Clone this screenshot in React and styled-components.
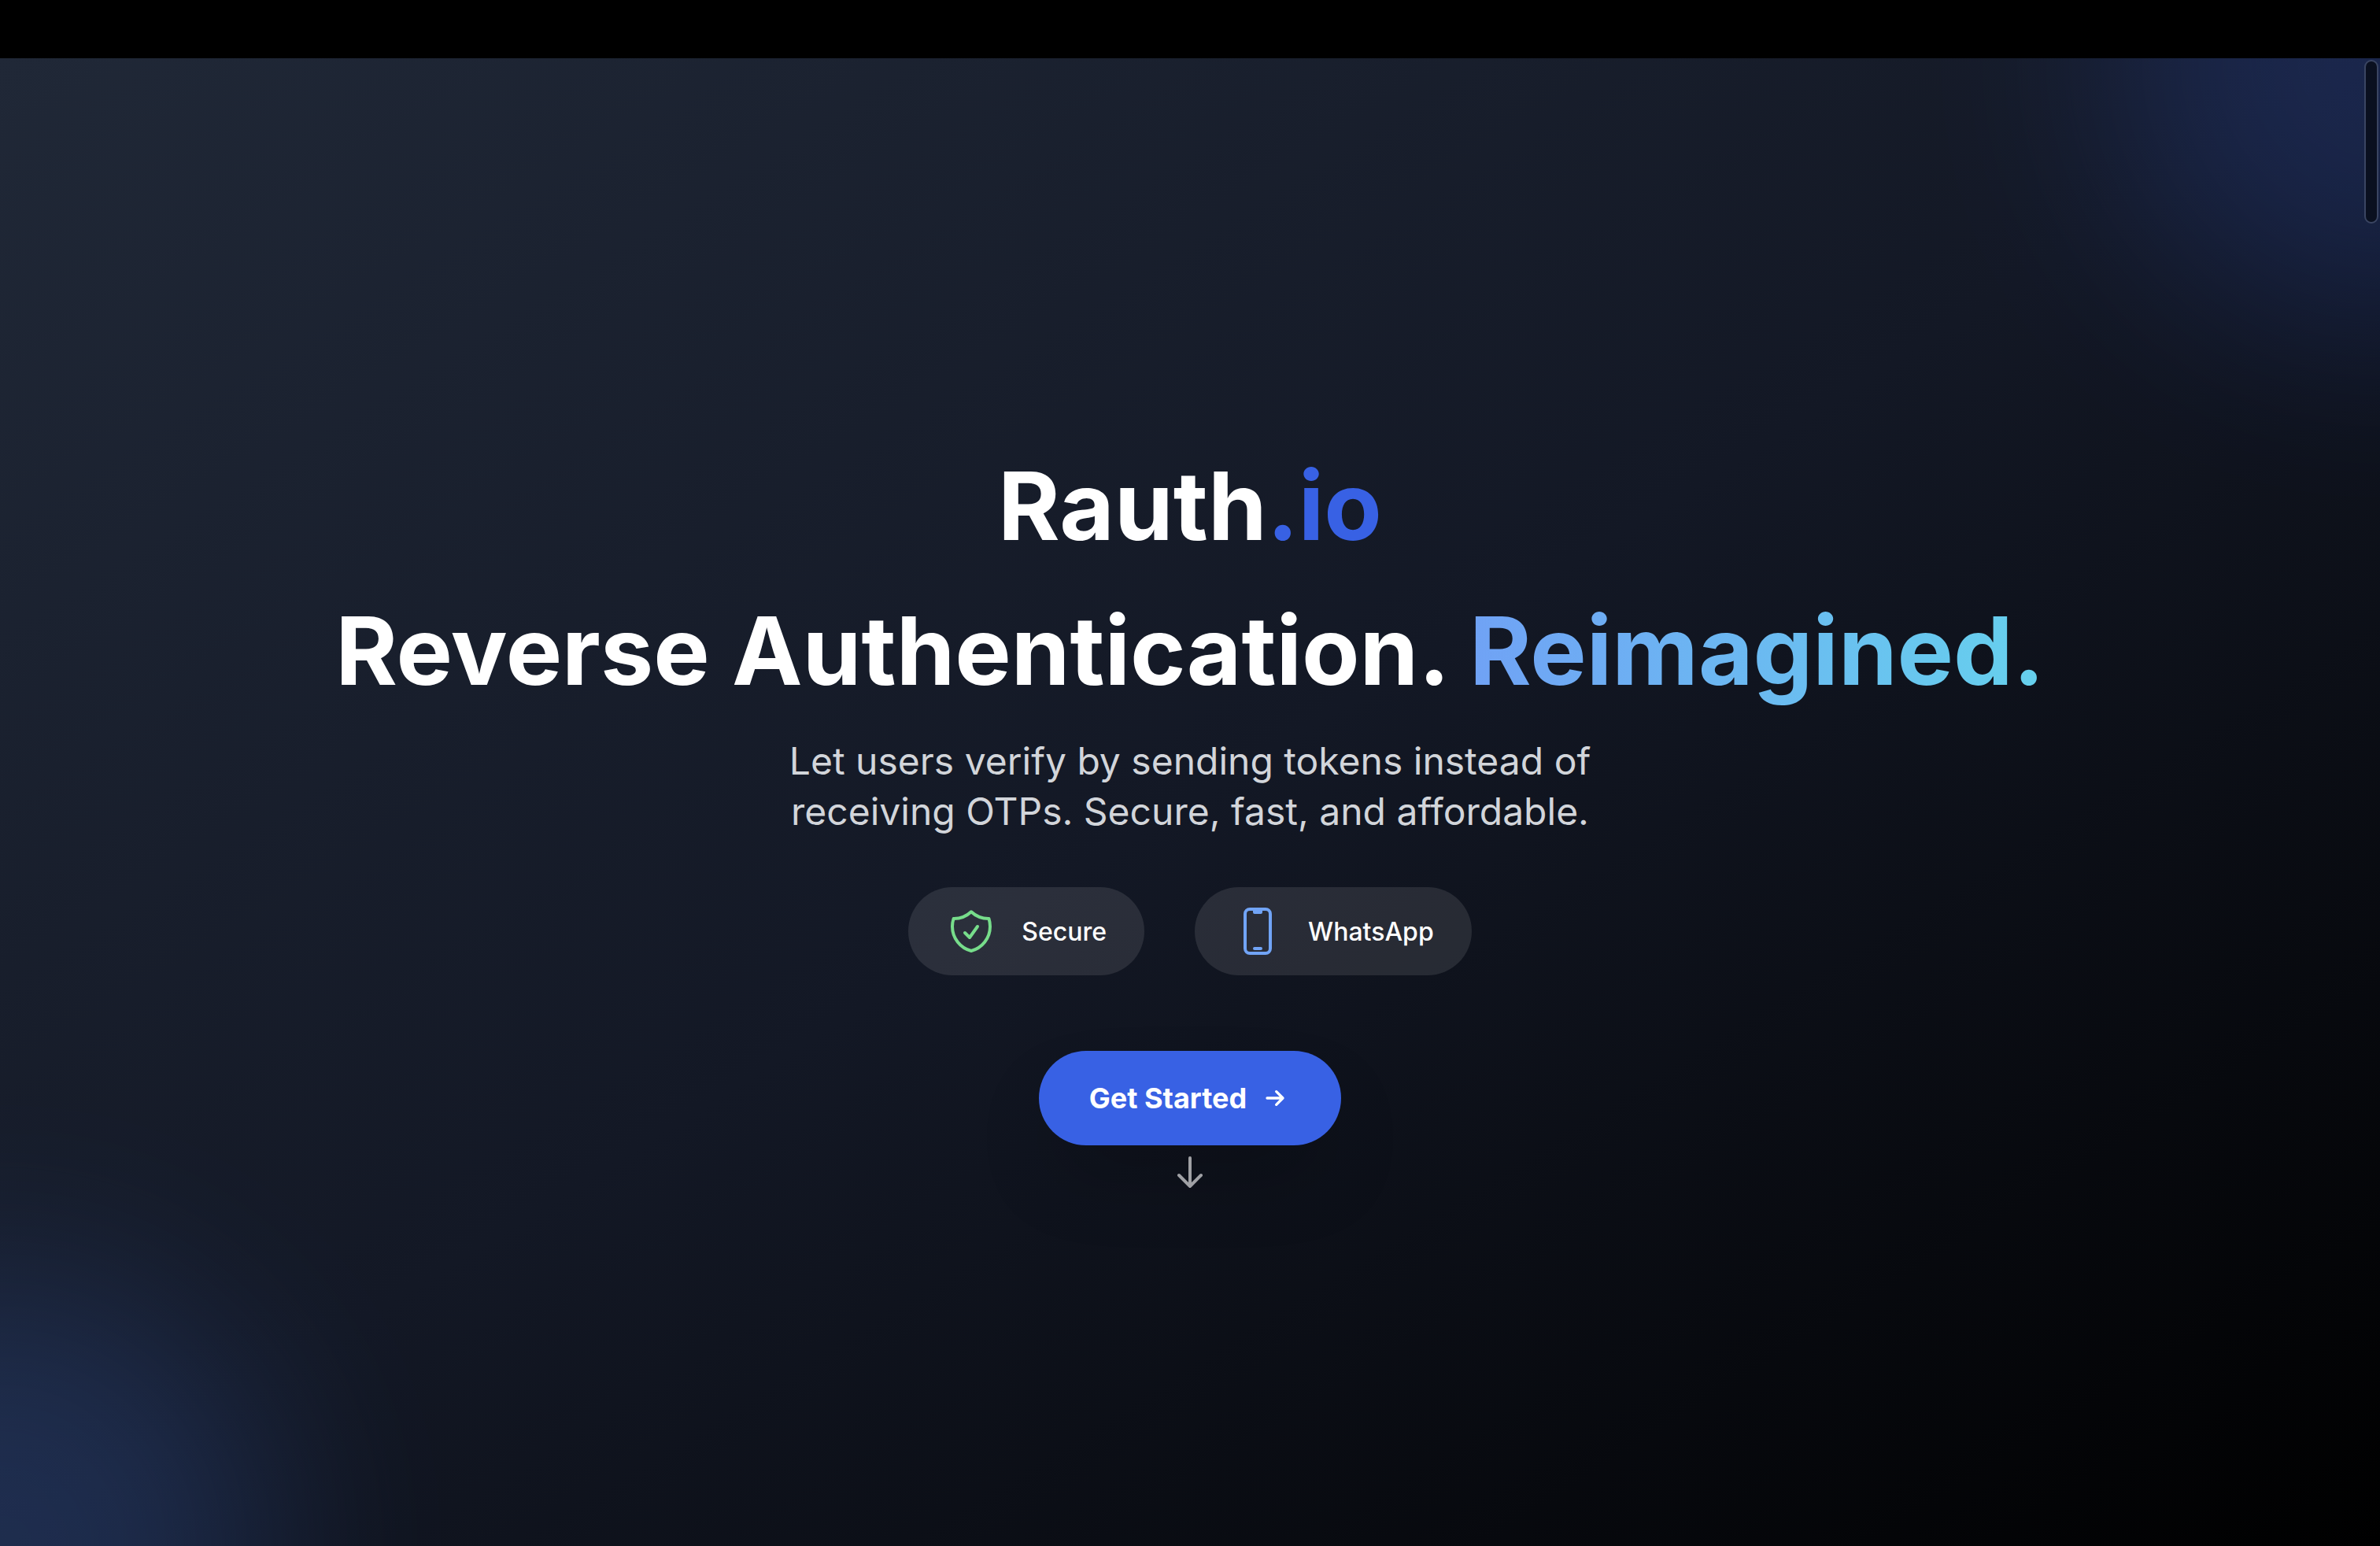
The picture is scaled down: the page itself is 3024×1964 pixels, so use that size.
import React from "react";
import styled, { createGlobalStyle } from "styled-components";
import { HiOutlineShieldCheck, HiOutlineDevicePhoneMobile } from "react-icons/hi2";

const FEATURES = [
  { id: 1, name: "Secure", icon: HiOutlineShieldCheck, color: "#77dd8b" },
  { id: 2, name: "WhatsApp", icon: HiOutlineDevicePhoneMobile, color: "#71a4f6" },
];

const App = () => {
  return (
    <Page>
      <GlobalStyle />
      <TopBar />
      <Hero>
        <Glow $corner="topRight" />
        <Glow $corner="bottomLeft" />
        <Content>
          <Brand>
            Rauth<span>.io</span>
          </Brand>
          <Headline>
            Reverse Authentication. <span>Reimagined.</span>
          </Headline>
          <Tagline>Let users verify by sending tokens instead of receiving OTPs. Secure, fast, and affordable.</Tagline>
          <FeatureList>
            {FEATURES.map(({ id, name, icon: Icon, color }) => (
              <Feature key={id}>
                <Icon size="64px" color={color} />
                {name}
              </Feature>
            ))}
          </FeatureList>
          <StartButton type="button">
            Get Started
            <svg viewBox="0 0 24 24" width="40" height="40" aria-hidden="true">
              <path d="M13 7l5 5m0 0l-5 5m5-5H6" />
            </svg>
          </StartButton>
        </Content>
        <ScrollHint viewBox="0 0 24 24" aria-hidden="true">
          <path d="M19 14l-7 7m0 0l-7-7m7 7V3" />
        </ScrollHint>
        <ScrollThumb />
      </Hero>
    </Page>
  );
};

const GlobalStyle = createGlobalStyle`
  *,
  *::before,
  *::after {
    box-sizing: border-box;
  }

  body {
    margin: 0;
    background-color: black;
    color: white;
    font-family: Inter, "Liberation Sans", sans-serif;
  }

  h1, h2, p, ul {
    margin: 0;
    padding: 0;
  }
`;

const Page = styled.div`
  display: flex;
  flex-direction: column;
  min-height: 100vh;
`;

const TopBar = styled.header`
  height: 74px;
  background-color: black;
`;

const Hero = styled.main`
  position: relative;
  display: grid;
  grid-template-rows: 1fr auto 1fr;
  justify-items: center;
  flex: 1;
  overflow: hidden;
  background-image: linear-gradient(to bottom right, #202837, #131825 50%, #000000);
`;

const Glow = styled.div`
  position: absolute;
  width: 680px;
  height: 680px;
  border-radius: 50%;
  opacity: 0.2;
  filter: blur(128px);
  ${(props) =>
    props.$corner === "topRight"
      ? "top: -340px; right: -340px; background-color: #3861e4;"
      : "bottom: -340px; left: -340px; background-color: #4b80ef;"}
`;

const Content = styled.div`
  position: relative;
  display: flex;
  flex-direction: column;
  align-items: center;
  grid-row: 2;
  text-align: center;
`;

const Brand = styled.h1`
  margin-bottom: 64px;
  font-size: 120px;
  font-weight: 700;
  line-height: 120px;

  span {
    color: #3861e4;
  }
`;

const Headline = styled.h2`
  margin-bottom: 48px;
  font-size: 120px;
  font-weight: 700;
  line-height: 120px;

  span {
    color: transparent;
    background-image: linear-gradient(to right, #70a2f5, #66d1ed);
    background-clip: text;
  }
`;

const Tagline = styled.p`
  max-width: 1152px;
  margin-bottom: 64px;
  color: #d2d5da;
  font-size: 48px;
  line-height: 64px;
`;

const FeatureList = styled.ul`
  display: flex;
  gap: 64px;
  margin-bottom: 96px;
  list-style: none;
`;

const Feature = styled.li`
  display: flex;
  align-items: center;
  gap: 32px;
  padding: 24px 48px;
  border-radius: 56px;
  background-color: rgba(255, 255, 255, 0.1);
  font-size: 32px;
  font-weight: 500;
`;

const StartButton = styled.button`
  display: flex;
  align-items: center;
  gap: 16px;
  padding: 32px 64px;
  border: none;
  border-radius: 60px;
  background-color: #3861e4;
  box-shadow: 0 50px 100px -24px rgba(0, 0, 0, 0.25);
  color: white;
  font-family: inherit;
  font-size: 36px;
  font-weight: 700;
  line-height: 56px;
  cursor: pointer;

  svg {
    fill: none;
    stroke: currentColor;
    stroke-width: 2;
    stroke-linecap: round;
    stroke-linejoin: round;
  }
`;

const ScrollHint = styled.svg`
  position: relative;
  grid-row: 3;
  width: 48px;
  height: 48px;
  margin-top: 10px;
  fill: none;
  stroke: #a0a1a5;
  stroke-width: 2;
  stroke-linecap: round;
  stroke-linejoin: round;
`;

const ScrollThumb = styled.div`
  position: absolute;
  top: 2px;
  right: 2px;
  width: 18px;
  height: 208px;
  border: 2px solid #3a4562;
  border-radius: 9px;
  background-color: #0a1020;
`;

export default App;
